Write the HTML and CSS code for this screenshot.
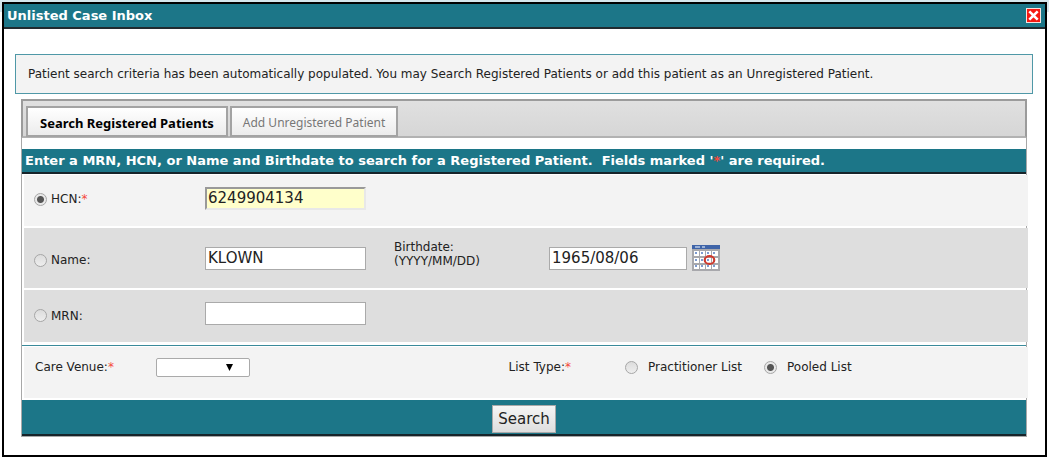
FILE: index.html
```html
<!DOCTYPE html>
<html lang="en">
<head>
<meta charset="utf-8">
<title>Unlisted Case Inbox</title>
<link rel="stylesheet" href="styles.css">
</head>
<body>
<main class="dialog">
  <header class="titlebar">
    <h1 class="title">Unlisted Case Inbox</h1>
    <button class="close" type="button" aria-label="Close">
      <svg viewBox="0 0 15 15" width="15" height="15" aria-hidden="true">
        <rect width="15" height="15" fill="#f8e4e0"/>
        <rect x="1" y="1" width="13" height="13" fill="#f71a12"/>
        <path d="M3.3 3.3L11.7 11.7M11.7 3.3L3.3 11.7" stroke="#fff" stroke-width="2.6"/>
      </svg>
    </button>
  </header>
  <p class="notice">Patient search criteria has been automatically populated. You may Search Registered Patients or add this patient as an Unregistered Patient.</p>
  <form class="panel">
    <nav class="tabs">
      <button class="tab tab-active" type="button">Search Registered Patients</button>
      <button class="tab" type="button">Add Unregistered Patient</button>
    </nav>
    <h2 class="band">Enter a MRN, HCN, or Name and Birthdate to search for a Registered Patient.&nbsp; Fields marked '<span class="star">*</span>' are required.</h2>
    <div class="row row-light">
      <label class="choice"><input class="radio" type="radio" name="by" checked><span>HCN:<span class="star">*</span></span></label>
      <input class="field field-focus" type="text" value="6249904134" aria-label="HCN">
    </div>
    <div class="row row-tall">
      <label class="choice"><input class="radio" type="radio" name="by"><span>Name:</span></label>
      <input class="field" type="text" value="KLOWN" aria-label="Name">
      <label class="birth-label" for="birth">Birthdate:<br>(YYYY/MM/DD)</label>
      <div class="birth">
        <input class="field" id="birth" type="text" value="1965/08/06">
        <button class="calendar" type="button" aria-label="Pick a date">
          <svg viewBox="0 0 28 26" width="28" height="26" aria-hidden="true">
            <rect width="28" height="26" fill="#a8a8ac"/>
            <rect width="28" height="4" fill="#3f64a8"/>
            <path d="M3 2H8M10 2H13" stroke="#b9cae6" stroke-width="1.5"/>
            <path d="M2 6h5v5H2zM8 6h5v5H8zM14 6h5v5h-5zM20 6h6v5h-6zM2 13h5v5H2zM8 13h5v5H8zM14 13h5v5h-5zM20 13h6v5h-6zM2 20h5v4H2zM8 20h5v4H8zM14 20h5v4h-5zM20 20h6v4h-6z" fill="#fff"/>
            <path d="M4 7v2M10 7v2M16 7v2M22 7v2M4 14v2M10 14v2M16 14v2M22 14v2M4 20v2M10 20v2M16 20v2M22 20v2" stroke="#7d9bd0" stroke-width="2"/>
            <ellipse cx="17.5" cy="15" rx="4.8" ry="3.9" fill="none" stroke="#cf3a2e" stroke-width="2.1"/>
          </svg>
        </button>
      </div>
    </div>
    <div class="row">
      <label class="choice"><input class="radio" type="radio" name="by"><span>MRN:</span></label>
      <input class="field" type="text" aria-label="MRN">
    </div>
    <hr class="rule">
    <div class="row row-light row-options">
      <label for="venue">Care Venue:<span class="star">*</span></label>
      <div class="select-wrap">
        <select class="select" id="venue"><option></option></select>
        <svg class="arrow" viewBox="0 0 7 7" width="7" height="7" aria-hidden="true"><path d="M0 0H7L3.5 7Z" fill="#000"/></svg>
      </div>
      <span class="list-type" id="list-type">List Type:<span class="star">*</span></span>
      <div class="options" role="radiogroup" aria-labelledby="list-type">
        <label class="option"><input class="radio" type="radio" name="list">Practitioner List</label>
        <label class="option"><input class="radio" type="radio" name="list" checked>Pooled List</label>
      </div>
    </div>
    <footer class="footer"><button class="search" type="submit">Search</button></footer>
  </form>
</main>
</body>
</html>
```
FILE: styles.css
```css
* {
  box-sizing: border-box;
}

body {
  margin: 0;
  padding: 2px 2px 0;
  background: linear-gradient(#d5e6ec 12px, #fff 12px);
  font: 12px/14px Verdana, "DejaVu Sans", sans-serif;
  color: #222;
}

.dialog {
  padding-bottom: 18px;
  border: 2px solid #000;
  background: #fff;
}

.titlebar {
  display: flex;
  align-items: center;
  justify-content: space-between;
  height: 25px;
  padding: 0 4px 0 3px;
  border-bottom: 2px solid #202b30;
  background: #1c7688;
}

.title {
  margin: 0;
  color: #fff;
  font-size: 13px;
  line-height: 16px;
}

.close,
.calendar {
  display: flex;
  padding: 0;
  border: 0;
  background: none;
}

.notice {
  margin: 25px 12px 5px 11px;
  padding: 12px;
  border: 1px solid #4f98a7;
  background: #f3f3f3;
}

.panel {
  margin: 0 18px 0 17px;
  border: 1px solid #a8a8a8;
  border-top: 0;
}

.tabs {
  display: flex;
  gap: 2px;
  height: 39px;
  margin: 0 -1px 11px;
  padding: 5px 3px 0;
  border: 2px solid #9b9b9b;
  border-bottom-color: #b2b2b2;
  background: linear-gradient(#e0e0e0, #d6d6d6);
}

.tab {
  height: 31px;
  padding: 2px 11px 0;
  border: 2px solid #a3a3a3;
  background: linear-gradient(#fff, #ececec);
  color: #777;
  font: 12px/16px "Noto Sans", sans-serif;
}

.tab-active {
  padding: 2px 12px 0;
  color: #000;
  font-size: 13px;
  font-weight: bold;
}

.band {
  margin: 0 0 1px;
  padding: 4px 3px;
  border-bottom: 2px solid #17242a;
  background: #1c7688;
  color: #fff;
  font-size: 13px;
  line-height: 15px;
}

.star {
  color: #f5483b;
}

.row {
  display: grid;
  grid-template-columns: 171px 161px 126px 1fr;
  align-items: center;
  height: 52px;
  margin: 0 -2px 2px 2px;
  padding: 0 10px 5px;
  background: #dedede;
}

.row .choice {
  padding-top: 4px;
}

.row-light {
  height: 51px;
  background: #f3f3f3;
}

.row-light .choice {
  padding-top: 2px;
}

.row-tall {
  height: 60px;
  padding-bottom: 0;
}

.choice,
.option {
  display: flex;
  align-items: center;
}

.choice {
  gap: 4px;
}

.radio {
  appearance: none;
  flex: none;
  width: 13px;
  height: 13px;
  margin: 0;
  border: 1px solid #a6a6a6;
  border-radius: 50%;
  background: linear-gradient(#dcdcdc, #eee);
}

.radio:checked {
  background: radial-gradient(circle, #555 3px, #e9e9e9 4px);
}

.field {
  width: 100%;
  height: 23px;
  padding: 0 2px;
  border: 1px solid #aaa;
  border-radius: 0;
  background: #fff;
  color: #222;
  font: 15px/19px Verdana, "DejaVu Sans", sans-serif;
}

.field-focus {
  padding: 0 1px;
  border: 2px solid;
  border-color: #999 #e8e8e8 #e8e8e8 #999;
  background: #ffffcb;
}

.birth-label {
  padding: 0 0 8px 28px;
}

.birth {
  display: grid;
  grid-template-columns: 138px 28px;
  gap: 5px;
  align-items: center;
  padding-left: 57px;
}

.rule {
  height: 1px;
  margin: 3px 0 1px;
  border: 0;
  background: #3a8a9a;
}

.row-options {
  grid-template-columns: 121px 94px 321px 1fr;
  padding: 0 10px 11px 11px;
}

.list-type {
  justify-self: end;
}

.select-wrap {
  display: grid;
  align-items: center;
}

.select {
  grid-area: 1 / 1;
  appearance: none;
  height: 19px;
  border: 1px solid #aaa;
  border-radius: 2px;
  background: #fff;
}

.arrow {
  grid-area: 1 / 1;
  justify-self: end;
  margin-right: 17px;
  pointer-events: none;
}

.options {
  display: flex;
  gap: 22px;
  padding-left: 54px;
}

.option {
  gap: 10px;
}

.footer {
  display: flex;
  justify-content: center;
  padding: 5px 0 1px;
  border-bottom: 2px solid #17242a;
  background: #1c7688;
}

.search {
  height: 28px;
  padding: 0 5px;
  border: 1px solid #a9a9a9;
  background: linear-gradient(#f5f5f5, #dedede);
  color: #222;
  font: 15px/20px Verdana, "DejaVu Sans", sans-serif;
}
```
